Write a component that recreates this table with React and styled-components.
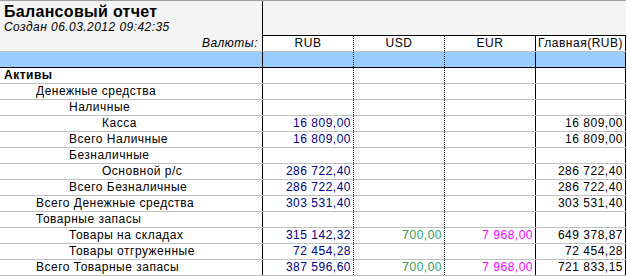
import styled, {createGlobalStyle} from 'styled-components';

const GlobalStyle = createGlobalStyle`
  body {
    margin: 0;
    background: #fff;
  }
`;

const COLUMNS = '263px 91px 91px 91px 90px';

const Report = styled.div`
  width: 626px;
  border-top: 1px solid #a0a0a0;
  font-family: "Liberation Sans", Arial, sans-serif;
  font-size: 12px;
  letter-spacing: 0.5px;
  color: #000;
`;

const Header = styled.div`
  display: grid;
  grid-template-columns: 263px 363px;
`;

const Info = styled.div`
  box-sizing: border-box;
  height: 51px;
  display: flex;
  flex-direction: column;
  padding: 2px 4px 0 4px;
  background: #f4f4f4;
  border-right: 1px solid #000;
  border-bottom: 1px solid #c0c0c0;
`;

const Title = styled.div`
  font-size: 16px;
  font-weight: bold;
  letter-spacing: 0.3px;
  line-height: 17px;
`;

const Created = styled.div`
  font-style: italic;
  letter-spacing: 0.45px;
  line-height: 14px;
`;

const CurrencyCaption = styled.div`
  margin-top: auto;
  font-style: italic;
  text-align: right;
  line-height: 15px;
`;

const HeaderRight = styled.div`
  display: flex;
  flex-direction: column;
`;

const TopBand = styled.div`
  height: 34px;
  background: #f4f4f4;
  border-bottom: 1px solid #000;
`;

const CurrencyRow = styled.div`
  display: grid;
  grid-template-columns: 91px 91px 91px 90px;
  height: 16px;
  box-sizing: border-box;
  border-bottom: 1px solid #c0c0c0;
`;

const CurrencyCell = styled.div`
  box-sizing: border-box;
  text-align: center;
  line-height: 15px;
  white-space: nowrap;
  border-right: 1px ${p => (p.$dotted ? 'dotted' : 'solid')} #000;
`;

const Row = styled.div`
  display: grid;
  grid-template-columns: ${COLUMNS};
  height: 16px;
  box-sizing: border-box;
  border-bottom: 1px solid ${p => p.$line || '#c0c0c0'};
  background: ${p => p.$bg || 'transparent'};
`;

const Cell = styled.div`
  box-sizing: border-box;
  line-height: 15px;
  white-space: nowrap;
  overflow: hidden;
  border-right: 1px ${p => (p.$dotted ? 'dotted' : 'solid')} #000;
`;

const Label = styled(Cell)`
  padding-left: ${p => [4, 36, 69, 102][p.$level]}px;
  font-weight: ${p => (p.$bold ? 'bold' : 'normal')};
`;

const Num = styled(Cell)`
  text-align: right;
  padding-right: 2px;
  color: ${p => p.$color};
`;

const COLORS = ['#000080', '#339966', '#ff00ff', '#000'];
const CURRENCIES = ['RUB', 'USD', 'EUR', 'Главная(RUB)'];

const rows = [
  {label: 'Активы', level: 0, bold: true},
  {label: 'Денежные средства', level: 1},
  {label: 'Наличные', level: 2},
  {label: 'Касса', level: 3, values: ['16 809,00', '', '', '16 809,00']},
  {label: 'Всего Наличные', level: 2, values: ['16 809,00', '', '', '16 809,00']},
  {label: 'Безналичные', level: 2},
  {label: 'Основной р/с', level: 3, values: ['286 722,40', '', '', '286 722,40']},
  {label: 'Всего Безналичные', level: 2, values: ['286 722,40', '', '', '286 722,40']},
  {label: 'Всего Денежные средства', level: 1, values: ['303 531,40', '', '', '303 531,40']},
  {label: 'Товарные запасы', level: 1},
  {label: 'Товары на складах', level: 2, values: ['315 142,32', '700,00', '7 968,00', '649 378,87']},
  {label: 'Товары отгруженные', level: 2, values: ['72 454,28', '', '', '72 454,28']},
  {label: 'Всего Товарные запасы', level: 1, values: ['387 596,60', '700,00', '7 968,00', '721 833,15']},
];

const isDotted = i => i === 0 || i === 1;

export default function App() {
  return (
    <Report>
      <GlobalStyle />
      <Header>
        <Info>
          <Title>Балансовый отчет</Title>
          <Created>Создан 06.03.2012 09:42:35</Created>
          <CurrencyCaption>Валюты:</CurrencyCaption>
        </Info>
        <HeaderRight>
          <TopBand />
          <CurrencyRow>
            {CURRENCIES.map((c, i) => (
              <CurrencyCell key={c} $dotted={isDotted(i)}>{c}</CurrencyCell>
            ))}
          </CurrencyRow>
        </HeaderRight>
      </Header>
      <Row $bg="#99ccff" $line="#000">
        <Cell />
        {CURRENCIES.map((c, i) => (
          <Cell key={c} $dotted={isDotted(i)} />
        ))}
      </Row>
      {rows.map(r => (
        <Row key={r.label}>
          <Label $level={r.level} $bold={r.bold}>{r.label}</Label>
          {[0, 1, 2, 3].map(i => (
            <Num key={i} $dotted={isDotted(i)} $color={COLORS[i]}>
              {r.values ? r.values[i] : ''}
            </Num>
          ))}
        </Row>
      ))}
    </Report>
  );
}
